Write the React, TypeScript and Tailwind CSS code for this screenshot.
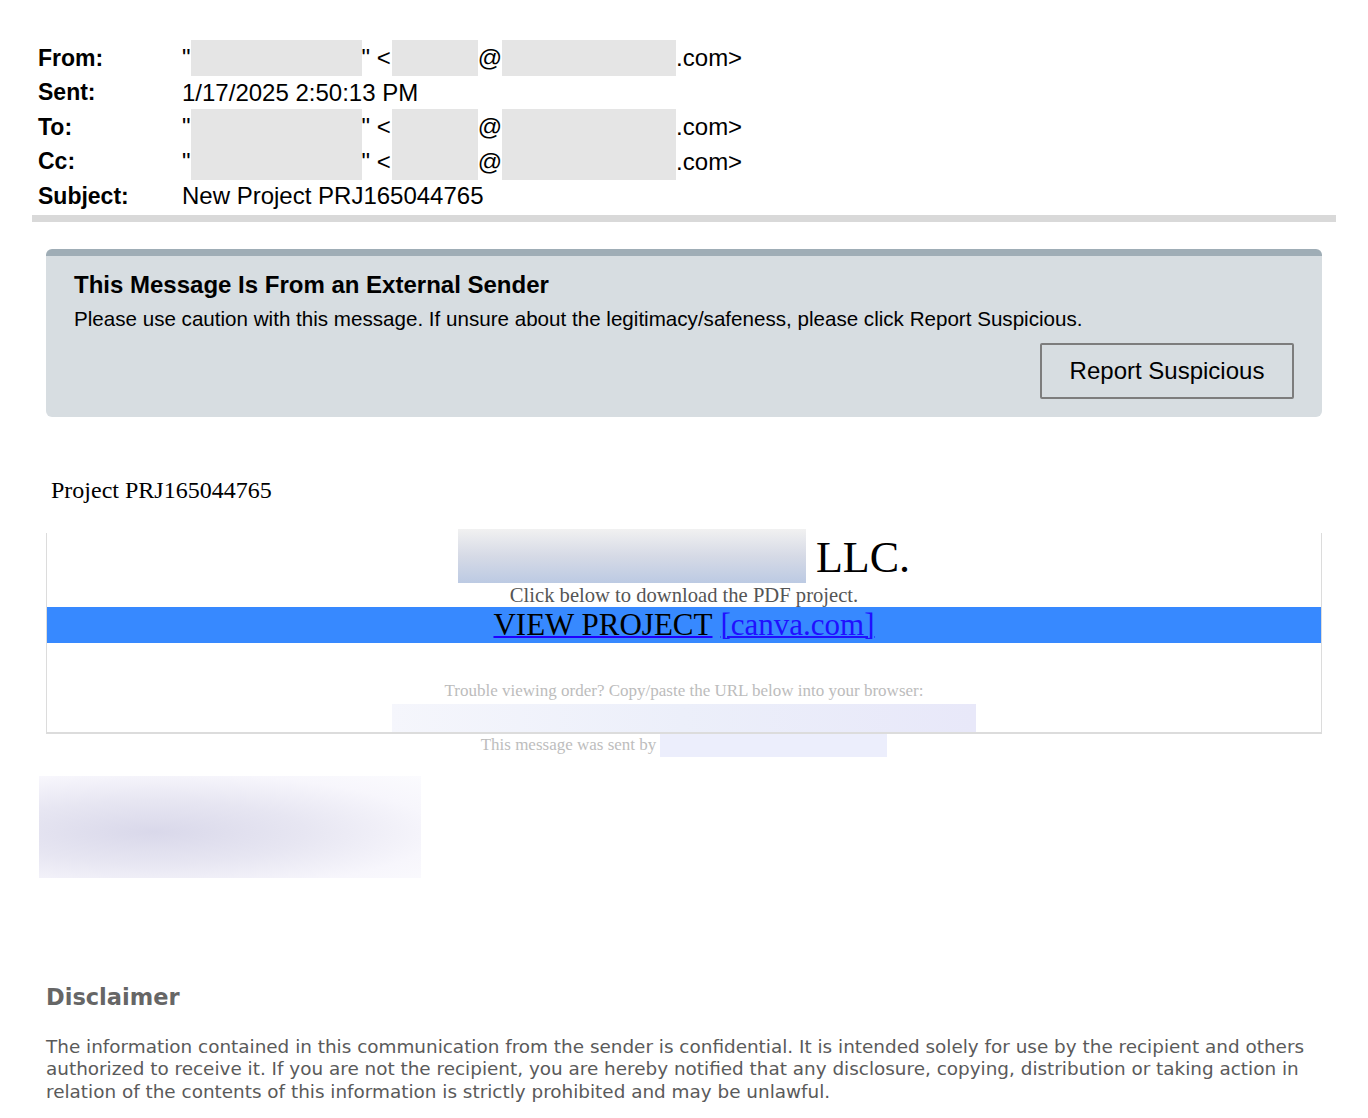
import React from 'react';

const Blot = ({ className }: { className: string }) => (
  <span className={`inline-block align-middle bg-[#e5e5e5] ${className}`} />
);

const AddressRow = ({ label }: { label: string }) => (
  <div className="flex h-[34.5px] items-center">
    <span className="w-[144px] text-[23px] font-bold">{label}</span>
    <span className="flex items-center">
      "<Blot className="h-[36px] w-[171px]" />" &lt;
      <Blot className="ml-[1px] h-[36px] w-[86px]" />@
      <Blot className="h-[36px] w-[174px]" />.com&gt;
    </span>
  </div>
);

const HeaderRow = ({ label, value }: { label: string; value: string }) => (
  <div className="flex h-[34.5px] items-center">
    <span className="w-[144px] text-[23px] font-bold">{label}</span>
    <span>{value}</span>
  </div>
);

const ExternalBanner = () => (
  <div className="mx-[46px] mt-[27px] rounded-[6px] border-t-[7px] border-[#9fadb6] bg-[#d7dde1] px-[28px] pb-[18px] pt-[15px] font-['Liberation_Sans',Arial,sans-serif] text-black">
    <div className="text-[24px] font-bold leading-[28px]">This Message Is From an External Sender</div>
    <div className="mt-[8px] text-[20.6px] leading-[24px]">
      Please use caution with this message. If unsure about the legitimacy/safeness, please click Report Suspicious.
    </div>
    <div className="mt-[12px] flex justify-end">
      <button className="h-[56px] w-[254px] rounded-[2px] border-2 border-[#7d7d7d] text-[24px]">
        Report Suspicious
      </button>
    </div>
  </div>
);

const ProjectCard = () => (
  <div className="font-['Liberation_Serif','Times_New_Roman',serif]">
    <div className="ml-[51px] mt-[58px] text-[24px] leading-[30px] text-black">Project PRJ165044765</div>
    <div className="relative mx-[46px] mt-[28px] border-x border-b-2 border-[#dcdcdc]">
      <div className="flex items-end justify-center">
        <div className="-mt-[5px] h-[54px] w-[348px] bg-gradient-to-b from-[#f1f1f1] via-[#d6dae6] to-[#bccae3]" />
        <span className="ml-[10px] text-[44px] leading-[50px] text-black">LLC.</span>
      </div>
      <div className="text-center text-[20.6px] leading-[24px] text-[#555]">Click below to download the PDF project.</div>
      <div className="flex h-[36px] items-center justify-center bg-[#3789ff] text-[31px] leading-[36px]">
        <a className="text-black underline decoration-[#2000ff] decoration-2">VIEW PROJECT </a>
        <a className="ml-[8px] text-[#2010ff] underline decoration-2">[canva.com]</a>
      </div>
      <div className="mt-[38px] text-center text-[17px] leading-[20px] text-[#bcbcbc]">
        Trouble viewing order? Copy/paste the URL below into your browser:
      </div>
      <div className="flex justify-center pt-[3px]">
        <div className="h-[28px] w-[584px] bg-gradient-to-r from-[#f5f6fc] via-[#eceffa] to-[#e8e8f9]" />
      </div>
    </div>
    <div className="flex items-center justify-center text-[17px] leading-[22px] text-[#bdbdbd]">
      <span className="mr-[4px]">This message was sent by</span>
      <span className="inline-block h-[23px] w-[227px] bg-[#eceefc]" />
    </div>
    <div className="ml-[39px] mt-[19px] h-[102px] w-[382px] bg-[radial-gradient(ellipse_at_30%_55%,#d9d8ea_0%,#e7e6f2_40%,#f7f6fc_75%,#fbfbfe_100%)]" />
  </div>
);

const Disclaimer = () => (
  <div className="mx-[46px] mt-[104px] font-['DejaVu_Sans',Verdana,sans-serif] text-[#666]">
    <div className="text-[22.5px] font-bold leading-[30px]">Disclaimer</div>
    <p className="mt-[24px] text-[18.4px] leading-[22.5px] text-[#5a5a5a]">
      The information contained in this communication from the sender is confidential. It is intended solely for use by the recipient and others authorized to receive it. If you are not the recipient, you are hereby notified that any disclosure, copying, distribution or taking action in relation of the contents of this information is strictly prohibited and may be unlawful.
    </p>
  </div>
);

export default function App() {
  return (
    <div className="min-h-[1118px] w-[1368px] bg-white pb-[10px]">
      <div className="px-[38px] pt-[41px] font-['Liberation_Sans',Arial,sans-serif] text-[24px] leading-none text-black">
        <AddressRow label="From:" />
        <HeaderRow label="Sent:" value="1/17/2025 2:50:13 PM" />
        <AddressRow label="To:" />
        <AddressRow label="Cc:" />
        <HeaderRow label="Subject:" value="New Project PRJ165044765" />
      </div>
      <div className="mx-[32px] mt-[1px] h-[7px] bg-[#d9d9d9]" />
      <ExternalBanner />
      <ProjectCard />
      <Disclaimer />
    </div>
  );
}
